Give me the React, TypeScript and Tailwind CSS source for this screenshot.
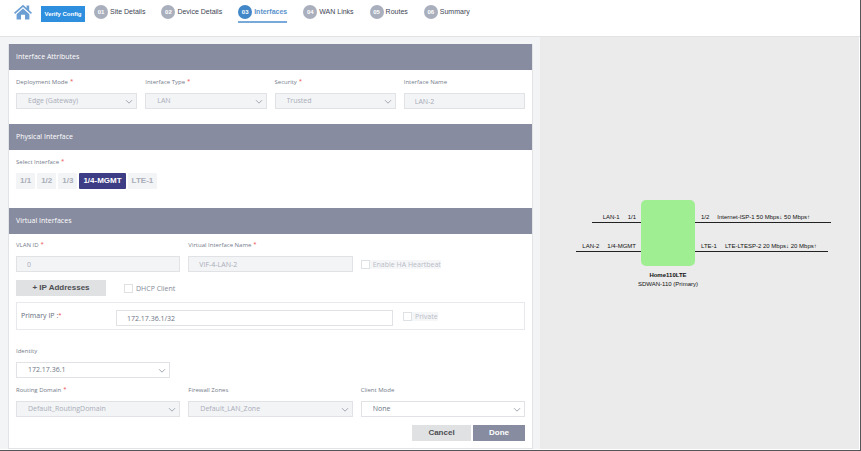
import type { ReactNode } from "react";

const steps = ["Site Details", "Device Details", "Interfaces", "WAN Links", "Routes", "Summary"];
const ports = ["1/1", "1/2", "1/3", "1/4-MGMT", "LTE-1"];

const fieldBase = "block h-4 w-full appearance-none rounded-none border border-[#e0e2e6] text-[7px] leading-[14px] outline-none";
const enabledField = "bg-white text-[#6d7484]";
const disabledField = "bg-[#f3f4f6] text-[#a9adb8]";

function HomeIcon() {
  return (
    <svg viewBox="0 0 18 16" className="h-4 w-[18px]" fill="#6b9fd4" aria-hidden="true">
      <path d="M9 0.8 L12.6 4 V1.4 H15.2 V6.3 L18 8.8 L16.9 10 L9 3.1 L1.1 10 L0 8.8 Z" />
      <path d="M9 4.6 L15.4 10.2 V15.6 H11 V10.8 H7 V15.6 H2.6 V10.2 Z" />
    </svg>
  );
}

function Label({ id, text, required }: { id: string; text: string; required?: boolean }) {
  return (
    <label htmlFor={id} className="mb-1.5 flex h-2.5 gap-0.5 text-[6px] leading-[10px] text-[#747b8a]">
      {text}
      {required && <Star />}
    </label>
  );
}

function Star() {
  return <span className="text-[6px] leading-[8px] text-[#f0484d]">*</span>;
}

type FieldProps = { id: string; label: string; value: string; required?: boolean; disabled?: boolean };

function SelectField({ id, label, value, required, disabled }: FieldProps) {
  return (
    <div>
      <Label id={id} text={label} required={required} />
      <div className="relative">
        <select id={id} disabled={disabled} className={`${fieldBase} pl-[11px] opacity-100 ${disabled ? disabledField : enabledField}`}>
          <option>{value}</option>
        </select>
        <svg viewBox="0 0 8 6" className="pointer-events-none absolute top-1.5 right-1 h-1.5 w-2" fill="none" stroke="#a3a8b3" aria-hidden="true">
          <path d="M1 1.2 L4 4.2 L7 1.2" />
        </svg>
      </div>
    </div>
  );
}

function TextField({ id, label, value, required, disabled }: FieldProps) {
  return (
    <div>
      <Label id={id} text={label} required={required} />
      <input id={id} defaultValue={value} disabled={disabled} className={`${fieldBase} pl-2.5 ${disabled ? disabledField : enabledField}`} />
    </div>
  );
}

function Check({ text, disabled }: { text: string; disabled?: boolean }) {
  return (
    <label className={`flex h-[9px] items-center gap-[3px] text-[7px] leading-[9px] whitespace-nowrap ${disabled ? "bg-[#f5f6f7] text-[#b9bcc7]" : "text-[#858a98]"}`}>
      <input type="checkbox" disabled={disabled} className="size-[9px] shrink-0 appearance-none border border-[#dfe2e5] bg-white" />
      {text}
    </label>
  );
}

function SectionTitle({ children }: { children: ReactNode }) {
  return <h2 className="flex h-[26px] items-center bg-[#888ca0] px-[7px] text-[7px] text-white">{children}</h2>;
}

function Link({ port, name, className }: { port: string; name: string; className: string }) {
  return (
    <div className={`flex h-2.5 gap-2 border-b border-[#222] text-[6px] leading-[9px] whitespace-nowrap ${className}`}>
      <span>{port}</span>
      <span>{name}</span>
    </div>
  );
}

export default function App() {
  return (
    <div className="flex min-h-screen flex-col border-r border-b border-[#55565a] bg-white font-['Open_Sans',sans-serif]">
      <header className="flex h-[37px] items-start border-b border-[#e2e3e5] pl-3.5 font-['Liberation_Sans',sans-serif]">
        <a href="#home" aria-label="Home" className="mt-1">
          <HomeIcon />
        </a>
        <button type="button" className="mt-1.5 ml-[9px] h-4 w-11 bg-[#2f8fdf] text-[6px] font-bold whitespace-nowrap text-white">
          Verify Config
        </button>
        <nav className="mt-[5px] ml-[9px] flex gap-4">
          {steps.map((step, i) => (
            <a
              key={step}
              href={`#step-${i + 1}`}
              className={`flex h-[18px] items-start gap-0.5 border-b-2 text-[7px] leading-[14px] whitespace-nowrap ${i === 2 ? "border-[#79a9d8] font-bold text-[#5b93cc]" : "border-transparent text-[#3e4554]"}`}
            >
              <span className={`flex size-3.5 items-center justify-center rounded-full text-[6px] font-bold text-white ${i === 2 ? "bg-[#4287c8]" : "bg-[#a9afbd]"}`}>
                0{i + 1}
              </span>
              {step}
            </a>
          ))}
        </nav>
      </header>

      <main className="mr-px mb-px grid grow grid-cols-[540fr_319fr]">
        <div className="bg-[#f3f4f6] pt-[7px] pr-[7px] pl-2">
          <form className="border-x border-b border-[#e2e3e6] bg-white">
            <SectionTitle>Interface Attributes</SectionTitle>
            <div className="grid grid-cols-4 gap-2 px-[7px] pt-[7px] pb-[15px]">
              <SelectField id="mode" label="Deployment Mode" value="Edge (Gateway)" required disabled />
              <SelectField id="type" label="Interface Type" value="LAN" required disabled />
              <SelectField id="security" label="Security" value="Trusted" required disabled />
              <TextField id="name" label="Interface Name" value="LAN-2" disabled />
            </div>

            <SectionTitle>Physical Interface</SectionTitle>
            <div className="px-[7px] pt-[7px] pb-[19px]">
              <Label id="port-3" text="Select Interface" required />
              <div className="flex gap-0.5 font-['Liberation_Sans',sans-serif]">
                {ports.map((port, i) => (
                  <button
                    key={port}
                    id={`port-${i}`}
                    type="button"
                    className={`h-4 rounded-[1px] px-1 text-[8px] font-bold ${i === 3 ? "bg-[#3d3d85] text-white" : "bg-[#f3f4f6] text-[#a9adb8]"}`}
                  >
                    {port}
                  </button>
                ))}
              </div>
            </div>

            <SectionTitle>Virtual Interfaces</SectionTitle>
            <div className="px-[7px] pt-1.5 pb-[7px]">
              <div className="grid grid-cols-3 items-end gap-2">
                <TextField id="vlan" label="VLAN ID" value="0" required disabled />
                <TextField id="vif" label="Virtual Interface Name" value="VIF-4-LAN-2" required disabled />
                <div className="flex h-4 items-center">
                  <Check text="Enable HA Heartbeat" disabled />
                </div>
              </div>

              <div className="mt-2 flex items-center gap-[18px]">
                <button type="button" className="h-4 w-[90px] bg-[#e0e1e3] font-['Liberation_Sans',sans-serif] text-[8px] font-bold text-[#4c4d52]">
                  + IP Addresses
                </button>
                <Check text="DHCP Client" />
              </div>

              <div className="mt-1.5 flex h-7 items-center border border-[#e8e9ec] pl-1">
                <label htmlFor="ip" className="flex w-[95px] text-[7px] leading-[10px] text-[#666c7c]">
                  Primary IP :<Star />
                </label>
                <div className="w-[277px] pt-1">
                  <input id="ip" defaultValue="172.17.36.1/32" className={`${fieldBase} pl-2.5 ${enabledField}`} />
                </div>
                <div className="ml-2.5">
                  <Check text="Private" disabled />
                </div>
              </div>

              <div className="mt-4 w-[154px]">
                <SelectField id="identity" label="Identity" value="172.17.36.1" />
              </div>
              <div className="mt-[7px] grid grid-cols-3 gap-2">
                <SelectField id="domain" label="Routing Domain" value="Default_RoutingDomain" required disabled />
                <SelectField id="zones" label="Firewall Zones" value="Default_LAN_Zone" disabled />
                <SelectField id="client" label="Client Mode" value="None" />
              </div>

              <div className="mt-2 flex justify-end gap-0.5 font-['Liberation_Sans',sans-serif] text-[8px] font-bold">
                <button type="button" className="h-4 w-[59px] bg-[#e0e1e3] text-[#4c4d52]">
                  Cancel
                </button>
                <button type="button" className="h-4 w-[52px] bg-[#888ca0] text-white">
                  Done
                </button>
              </div>
            </div>
          </form>
        </div>

        <aside className="bg-[#ebebeb] pt-[163px] pl-9 font-['Liberation_Sans',sans-serif] text-[#111]">
          <div className="flex">
            <div className="flex w-[65px] flex-col items-end gap-[19px] pt-[13px]">
              <Link port="LAN-1" name="1/1" className="w-[49px] justify-end pr-[5px]" />
              <Link port="LAN-2" name="1/4-MGMT" className="w-full justify-end pr-[5px]" />
            </div>
            <div className="h-[66px] w-[54px] rounded-[5px] bg-[#a0ee92]" />
            <div className="flex flex-col gap-[19px] pt-[13px]">
              <Link port="1/2" name="Internet-ISP-1 50 Mbps↓ 50 Mbps↑" className="w-[136px] pl-1.5" />
              <Link port="LTE-1" name="LTE-LTESP-2 20 Mbps↓ 20 Mbps↑" className="w-[133px] pl-1.5" />
            </div>
          </div>
          <div className="mt-[5px] ml-[52px] w-20 text-center text-[6px] leading-[9px]">
            <p className="font-bold">Home110LTE</p>
            <p>SDWAN-110 (Primary)</p>
          </div>
        </aside>
      </main>
    </div>
  );
}
